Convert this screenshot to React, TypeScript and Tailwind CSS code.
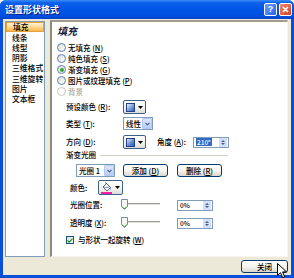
import React from "react";

const M = ({ c }: { c: string }) => <span className="underline">{c}</span>;

function Radio({ checked = false, disabled = false }: { checked?: boolean; disabled?: boolean }) {
  return (
    <span
      className={`w-[9px] h-[9px] rounded-full border flex items-center justify-center shrink-0 ${
        disabled ? "border-[#CAC8BB] bg-white" : "border-[#5D7FA9] bg-[linear-gradient(135deg,#DCDCD6,#FFFFFF)]"
      }`}
    >
      {checked && <span className="w-[4px] h-[4px] rounded-full bg-[#2BB02B]" />}
    </span>
  );
}

function Tri() {
  return (
    <svg width="5" height="3" viewBox="0 0 5 3">
      <path d="M0 0h5L2.5 3z" fill="#000" />
    </svg>
  );
}

function Chevron() {
  return (
    <svg width="5" height="4" viewBox="0 0 5 4">
      <path d="M0.5 0.8L2.5 2.8L4.5 0.8" stroke="#4D6185" strokeWidth="1.2" fill="none" />
    </svg>
  );
}

function SwatchButton({ children, w = "w-[23px]" }: { children: React.ReactNode; w?: string }) {
  return (
    <div
      className={`${w} h-full rounded-[2px] border border-[#3C5F8C] bg-[linear-gradient(to_bottom,#FFFFFF,#F2F1EC_60%,#DEDCD3)] flex items-center pl-[2px] gap-[3px]`}
    >
      {children}
      <Tri />
    </div>
  );
}

function Swatch({ diag = false }: { diag?: boolean }) {
  return (
    <span
      className={`w-[9px] h-[9px] border border-[#23418A] ${
        diag
          ? "bg-[linear-gradient(135deg,#E4EEFA,#6F95D6_50%,#2A56B0)]"
          : "bg-[linear-gradient(to_bottom_right,#F0F5FC,#8FAEE0_45%,#2E5DB8)]"
      }`}
    />
  );
}

function Combo({ text, w }: { text: string; w: string }) {
  return (
    <div className={`${w} h-full border border-[#7F9DB9] bg-white flex items-center`}>
      <span className="flex-1 pl-[2px] leading-[11px] whitespace-nowrap">{text}</span>
      <span className="w-[10px] h-[11px] shrink-0 rounded-[1px] bg-[linear-gradient(to_bottom,#DCE6FD,#B8CCF8)] border border-[#B4C8F6] flex items-center justify-center">
        <Chevron />
      </span>
    </div>
  );
}

function XPButton({ children, w }: { children: React.ReactNode; w: string }) {
  return (
    <div
      className={`${w} h-full rounded-[3px] border border-[#003C74] bg-[linear-gradient(to_bottom,#FFFFFF,#F4F3EE_55%,#DAD6CB)] flex items-center justify-center leading-[11px] whitespace-nowrap`}
    >
      {children}
    </div>
  );
}

function SpinArrows() {
  return (
    <span className="w-[8px] h-[9px] mr-px shrink-0 bg-[#D2DEFA] flex flex-col items-center justify-center gap-[1px]">
      <svg width="4" height="2" viewBox="0 0 4 2">
        <path d="M0 2h4L2 0z" fill="#4D6185" />
      </svg>
      <svg width="4" height="2" viewBox="0 0 4 2">
        <path d="M0 0h4L2 2z" fill="#4D6185" />
      </svg>
    </span>
  );
}

function Spinner({ children }: { children: React.ReactNode }) {
  return (
    <div className="w-[36px] h-[11px] border border-[#7F9DB9] bg-white flex items-center">
      <span className="flex-1 pl-[2px] text-[6.5px] leading-[9px]">{children}</span>
      <SpinArrows />
    </div>
  );
}

function Slider() {
  return (
    <div className="relative w-[39px] h-full">
      <div className="absolute left-[2px] right-0 top-[4px] h-[3px] border-t border-[#9D9C99] border-b border-b-white bg-[#E3E2DA]" />
      <svg className="absolute left-0 top-0" width="7" height="11" viewBox="0 0 7 11">
        <path d="M0.5 0.5h6v7l-3 3l-3-3z" fill="#F6F6F2" stroke="#7C8AA0" />
        <path d="M1 7.5l2.5 2.5l2.5-2.5" stroke="#21A121" fill="none" />
      </svg>
    </div>
  );
}

export default function App() {
  const listItems = ["填充", "线条", "线型", "阴影", "三维格式", "三维旋转", "图片", "文本框"];
  return (
    <div className="w-[294px] h-[278px] flex flex-col bg-[#0A4FDB] rounded-t-[6px] overflow-hidden [font-family:'Noto_Sans_CJK_SC',sans-serif] text-[7.5px] font-medium text-black">
      {/* Title bar */}
      <div className="h-[19px] shrink-0 flex items-center pl-[5px] pr-[2px] bg-[linear-gradient(to_bottom,#3B8DF8_0%,#0A5FEA_15%,#0055E5_50%,#0050E0_85%,#0040C8_100%)]">
        <span className="flex-1 text-white font-bold text-[9px] leading-none [text-shadow:1px_1px_#0A1883]">
          设置形状格式
        </span>
        <div className="flex gap-[2px]">
          <div className="w-[13px] h-[13px] rounded-[2px] border border-white bg-[linear-gradient(135deg,#6CA0FF,#2A62E8)] flex items-center justify-center text-white font-bold text-[9px] leading-none [font-family:'Liberation_Sans',sans-serif]">
            ?
          </div>
          <div className="w-[13px] h-[13px] rounded-[2px] border border-white bg-[linear-gradient(135deg,#F08A6E,#D2401E)] flex items-center justify-center">
            <svg width="7" height="7" viewBox="0 0 7 7">
              <path d="M1 1l5 5M6 1l-5 5" stroke="#fff" strokeWidth="1.6" />
            </svg>
          </div>
        </div>
      </div>

      {/* Body */}
      <div className="flex-1 mx-[3px] mb-[3px] bg-[#ECE9D8] flex flex-col">
        <div className="h-[238px] flex gap-[5px] pl-[2px] pr-[3px]">
          {/* List */}
          <div className="w-[40px] mt-[2px] h-[236px] border border-[#7F9DB9] bg-white flex flex-col text-[7.8px]">
            {listItems.map((t, i) => (
              <div
                key={t}
                className={`h-[10.3px] flex items-center pl-[6px] leading-none ${
                  i === 0
                    ? "bg-[linear-gradient(to_bottom,#FFF3D6,#FFD98C_50%,#F8B44A)] border border-[#E8A23A] pl-[5px]"
                    : ""
                }`}
              >
                {t}
              </div>
            ))}
          </div>

          {/* Panel */}
          <div className="flex-1 mt-px h-[237px] border-t-2 border-l-2 border-t-[#A09D8E] border-l-[#8E8B7D] border-r border-b border-r-[#F7F6EF] border-b-[#F7F6EF] bg-white flex flex-col pl-[5px] pt-[2px]">
            <div className="h-[14px] leading-[14px] text-[10px] italic font-bold text-[#1B1B3A]">填充</div>
            <div className="mt-[4px] flex flex-col">
              <div className="h-[11px] flex items-center gap-[2px]">
                <Radio />
                <span>无填充 (<M c="N" />)</span>
              </div>
              <div className="h-[11px] flex items-center gap-[2px]">
                <Radio />
                <span>纯色填充 (<M c="S" />)</span>
              </div>
              <div className="h-[11px] flex items-center gap-[2px]">
                <Radio checked />
                <span>渐变填充 (<M c="G" />)</span>
              </div>
              <div className="h-[11px] flex items-center gap-[2px]">
                <Radio />
                <span>图片或纹理填充 (<M c="P" />)</span>
              </div>
              <div className="h-[11px] flex items-center gap-[2px]">
                <Radio disabled />
                <span className="text-[#ACA899]">背景</span>
              </div>
            </div>

            <div className="ml-[9px] flex flex-col">
              <div className="mt-[3px] h-[14px] flex items-center">
                <span className="w-[57px]">预设颜色 (<M c="R" />):</span>
                <SwatchButton>
                  <Swatch />
                </SwatchButton>
              </div>
              <div className="mt-[3px] h-[13px] flex items-center">
                <span className="w-[57px]">类型 (<M c="T" />):</span>
                <Combo text="线性" w="w-[30px]" />
              </div>
              <div className="mt-[5px] h-[14px] flex items-center">
                <span className="w-[57px]">方向 (<M c="D" />):</span>
                <SwatchButton>
                  <Swatch diag />
                </SwatchButton>
                <span className="ml-[11px] w-[36px] whitespace-nowrap">角度 (<M c="A" />):</span>
                <div className="w-[36px] h-[11px] border border-[#7F9DB9] bg-white flex items-center">
                  <span className="flex-1 pl-[2px] flex">
                    <span className="bg-[#316AC5] text-white text-[6.5px] leading-[8px] px-px">210°</span>
                  </span>
                  <SpinArrows />
                </div>
              </div>
              <div className="mt-[1px] h-[10px] w-[162px] flex items-center">
                <span>渐变光圈</span>
                <span className="flex-1 ml-[4px] h-px bg-[#D0D0BF]" />
              </div>
              <div className="mt-[4px] h-[13px] pl-[10px] flex items-center">
                <Combo text="光圈 1" w="w-[39px]" />
                <div className="ml-[8px] h-full">
                  <XPButton w="w-[45px]">
                    添加 (<M c="D" />)
                  </XPButton>
                </div>
                <div className="ml-[9px] h-full">
                  <XPButton w="w-[45px]">
                    删除 (<M c="R" />)
                  </XPButton>
                </div>
              </div>
              <div className="mt-[3px] h-[15px] pl-[4px] flex items-center">
                <span className="w-[28px]">颜色:</span>
                <SwatchButton w="w-[25px]">
                  <svg width="11" height="12" viewBox="0 0 11 12">
                    <path d="M2 5l3.5-3.5l4 4l-3.5 3.5z" fill="#FFFFFF" stroke="#3A3A3A" strokeWidth="0.8" />
                    <path d="M3.2 5.2l5 0.2" stroke="#6A8FD6" strokeWidth="1" />
                    <path d="M9.2 5.5q1.3 1.6 0.4 2.4q-0.9-0.8 -0.4-2.4z" fill="#4A7FE0" />
                    <path d="M5.5 1.5l-1.5-1" stroke="#3A3A3A" strokeWidth="0.8" />
                    <rect x="0" y="10" width="11" height="2" fill="#FF1FA8" />
                  </svg>
                </SwatchButton>
              </div>
              <div className="mt-[4px] h-[12px] pl-[4px] flex items-center">
                <span className="w-[51px]">光圈位置:</span>
                <Slider />
                <div className="ml-[17px]">
                  <Spinner>0%</Spinner>
                </div>
              </div>
              <div className="mt-[6px] h-[12px] pl-[4px] flex items-center">
                <span className="w-[51px]">透明度 (<M c="X" />):</span>
                <Slider />
                <div className="ml-[17px]">
                  <Spinner>0%</Spinner>
                </div>
              </div>
              <div className="mt-[6px] h-[10px] flex items-center gap-[4px]">
                <span className="w-[8px] h-[8px] border border-[#1C5180] bg-[linear-gradient(135deg,#DCDCD6,#FFFFFF)] flex items-center justify-center">
                  <svg width="6" height="5" viewBox="0 0 6 5">
                    <path d="M0.5 2.5l1.7 1.7l3.3-3.6" stroke="#21A121" strokeWidth="1.3" fill="none" />
                  </svg>
                </span>
                <span>与形状一起旋转 (<M c="W" />)</span>
              </div>
            </div>
          </div>
        </div>

        {/* Bottom bar */}
        <div className="flex-1 flex justify-end items-start pt-[3px] pr-[3px]">
          <div className="relative h-[13px]">
            <XPButton w="w-[47px]">关闭</XPButton>
            <svg className="absolute left-[36px] top-[3px]" width="11" height="17" viewBox="0 0 11 17">
              <path d="M0.5 0.5L0.5 12.5L3.5 9.7L5.6 14.6L7.6 13.7L5.6 8.9L9.5 8.9Z" fill="#fff" stroke="#000" strokeWidth="1" strokeLinejoin="round" />
            </svg>
          </div>
        </div>
      </div>
    </div>
  );
}
